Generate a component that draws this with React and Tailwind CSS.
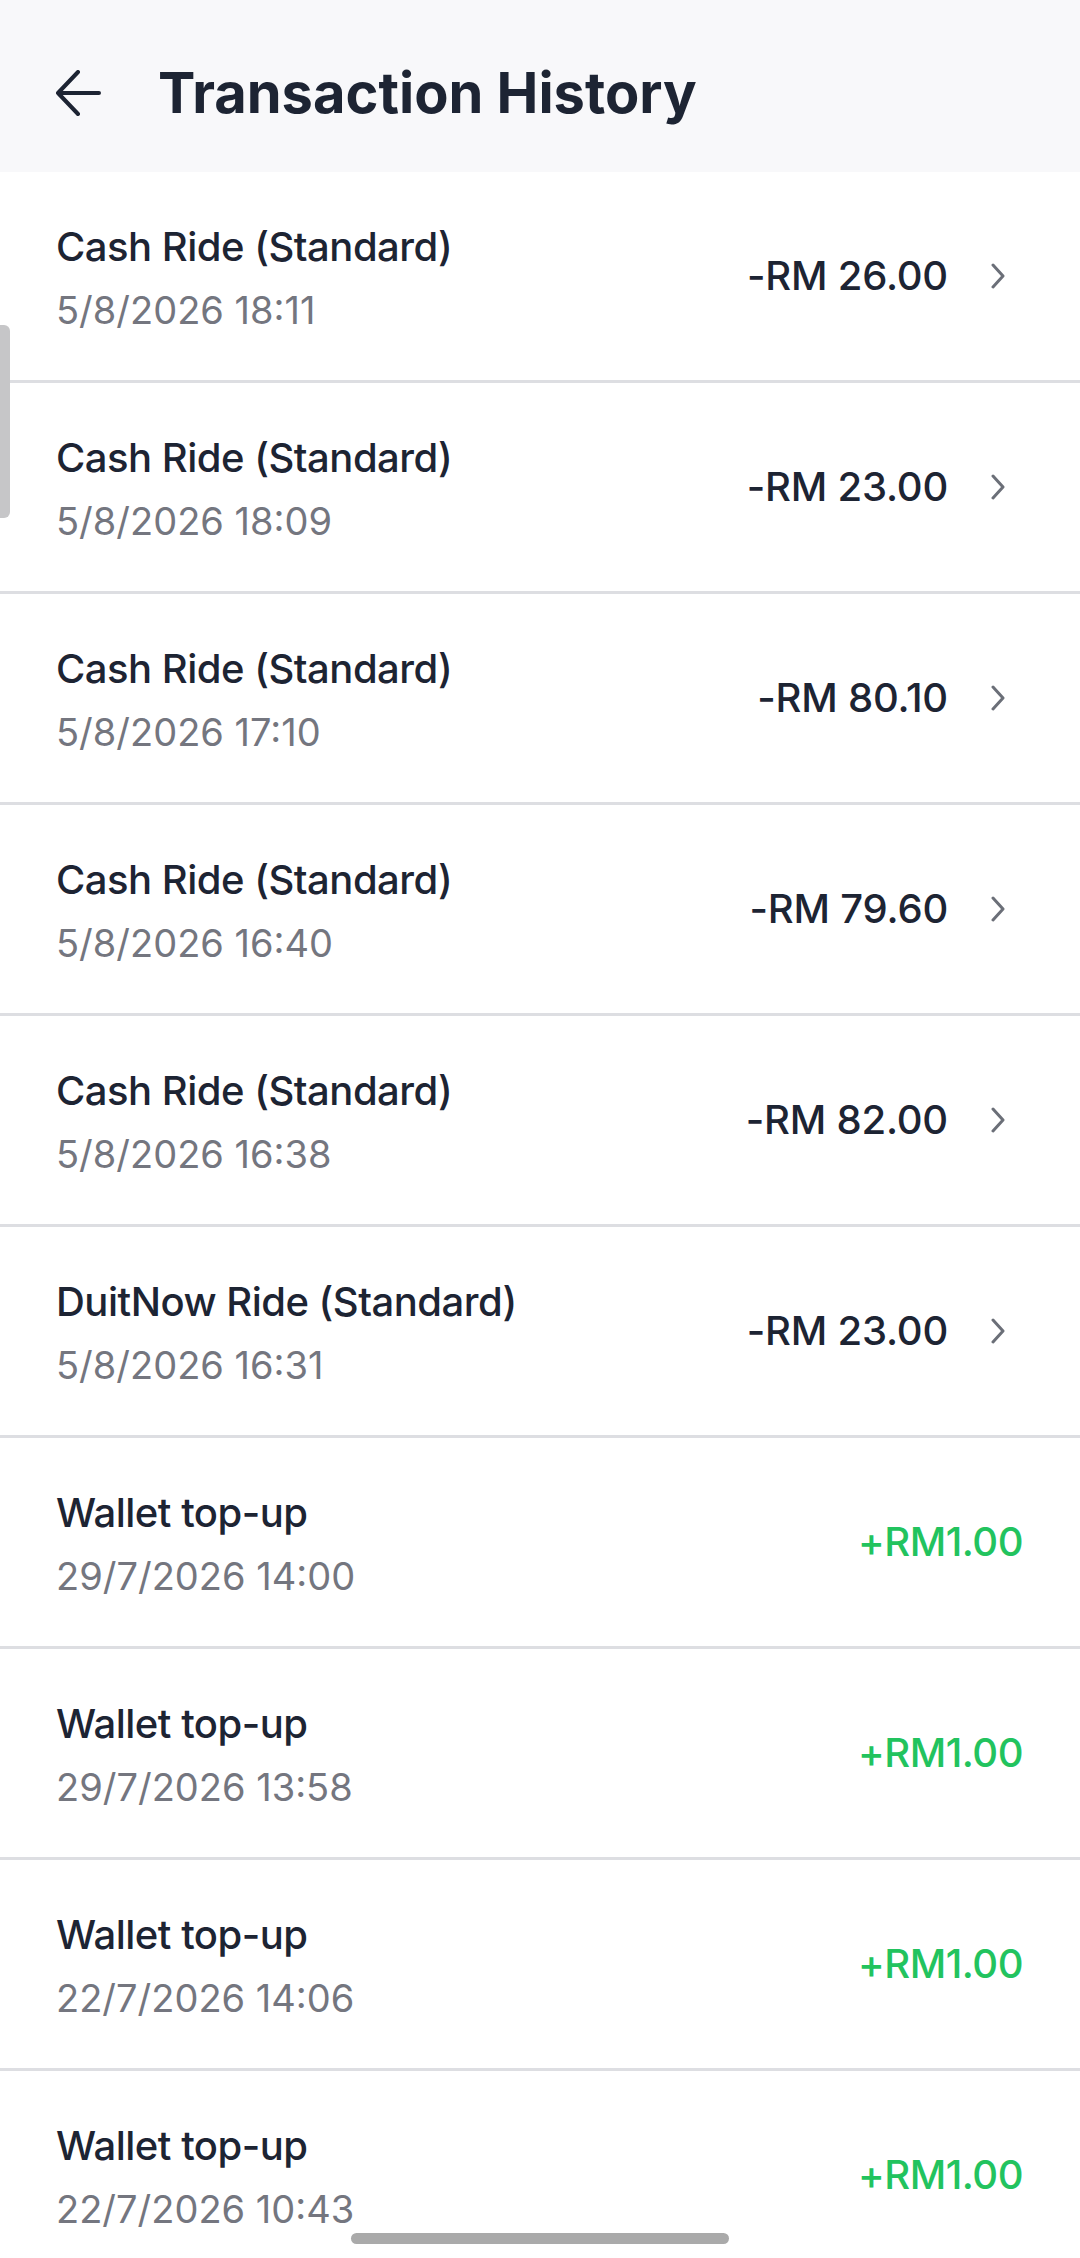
import { useState } from 'react';

const transacciones = [
  { titulo: 'Cash Ride (Standard)', fecha: '5/8/2026 18:11', monto: '-RM 26.00', tipo: 'debito' },
  { titulo: 'Cash Ride (Standard)', fecha: '5/8/2026 18:09', monto: '-RM 23.00', tipo: 'debito' },
  { titulo: 'Cash Ride (Standard)', fecha: '5/8/2026 17:10', monto: '-RM 80.10', tipo: 'debito' },
  { titulo: 'Cash Ride (Standard)', fecha: '5/8/2026 16:40', monto: '-RM 79.60', tipo: 'debito' },
  { titulo: 'Cash Ride (Standard)', fecha: '5/8/2026 16:38', monto: '-RM 82.00', tipo: 'debito' },
  { titulo: 'DuitNow Ride (Standard)', fecha: '5/8/2026 16:31', monto: '-RM 23.00', tipo: 'debito' },
  { titulo: 'Wallet top-up', fecha: '29/7/2026 14:00', monto: '+RM1.00', tipo: 'credito' },
  { titulo: 'Wallet top-up', fecha: '29/7/2026 13:58', monto: '+RM1.00', tipo: 'credito' },
  { titulo: 'Wallet top-up', fecha: '22/7/2026 14:06', monto: '+RM1.00', tipo: 'credito' },
  { titulo: 'Wallet top-up', fecha: '22/7/2026 10:43', monto: '+RM1.00', tipo: 'credito' },
];

const Fila = ({ t }) => (
  <div className="h-[211px] flex items-center justify-between pl-[56px] pr-[57px] border-b-[3px] border-[#dddee2] bg-white">
    <div className="flex flex-col">
      <span className="text-[40px] leading-[48px] font-medium text-[#1d2433] tracking-[-0.5px]">{t.titulo}</span>
      <span className="mt-[19px] text-[38px] leading-[40px] text-[#74767f]">{t.fecha}</span>
    </div>
    {t.tipo === 'debito' ? (
      <div className="flex items-center">
        <span className="text-[40px] leading-[48px] font-medium text-[#1d2433] tracking-[-0.2px]">{t.monto}</span>
        <svg className="ml-[43px] mr-[18px]" width="14" height="26" viewBox="0 0 14 26" fill="none">
          <path d="M2 2 L12 13 L2 24" stroke="#6b6f78" strokeWidth="3" strokeLinecap="round" strokeLinejoin="round" />
        </svg>
      </div>
    ) : (
      <span className="text-[40px] leading-[48px] font-medium text-[#22c35e] tracking-[-0.5px]">{t.monto}</span>
    )}
  </div>
);

const App = () => {
  const [lista] = useState(transacciones);

  return (
    <div className="relative w-[1080px] h-[2258px] overflow-hidden bg-white" style={{ fontFamily: 'Inter, "Noto Sans", sans-serif' }}>
      <div className="h-[172px] bg-[#f8f8fa] flex items-center pl-[55px] pt-[14px]">
        <svg width="46" height="46" viewBox="0 0 46 46" fill="none">
          <path d="M44 23 H3 M23 2 L3 23 L23 44" stroke="#1d2433" strokeWidth="4" strokeLinecap="round" strokeLinejoin="round" />
        </svg>
        <h1 className="ml-[57px] text-[56px] font-bold text-[#1d2433]">Transaction History</h1>
      </div>

      <div>
        {lista.map((t, i) => (
          <Fila key={i} t={t} />
        ))}
      </div>

      <div className="absolute left-0 top-[325px] w-[10px] h-[193px] bg-[#c6c6c8] rounded-r-[6px]" />
      <div className="absolute left-[351px] top-[2233px] w-[378px] h-[11px] bg-[#aaaaaa] rounded-full" />
    </div>
  );
};

export default App;
